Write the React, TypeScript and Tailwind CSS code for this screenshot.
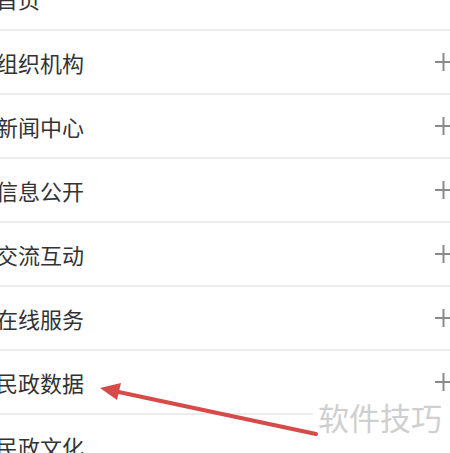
const items = ["首页", "组织机构", "新闻中心", "信息公开", "交流互动", "在线服务", "民政数据", "民政文化"];

const PlusMark = () => (
  <svg width="17" height="20" viewBox="0 0 17 20" className="shrink-0 -mr-[2px]">
    <line x1="0" y1="10" x2="17" y2="10" stroke="#8a8a8a" strokeWidth="2" />
    <line x1="8.5" y1="1" x2="8.5" y2="19" stroke="#8a8a8a" strokeWidth="2" />
  </svg>
);

export default function App() {
  return (
    <div
      className="relative w-[450px] h-[453px] overflow-hidden bg-white"
      style={{ fontFamily: '"Noto Sans CJK SC", "Noto Sans", sans-serif' }}
    >
      <ul className="-mt-[33px]">
        {items.map((item, i) => (
          <li
            key={item}
            className="flex items-center justify-between h-[64px] border-b-2 border-[#ececec]"
          >
            <span className="-ml-[4px] text-[22px] leading-none text-[#333333]">{item}</span>
            {i > 0 && <PlusMark />}
          </li>
        ))}
      </ul>

      {/* watermark */}
      <div className="absolute left-[313px] top-[398px] bottom-0 right-0 pl-[5px] bg-white text-[31px] leading-[38px] text-[#cfcfcf]">
        软件技巧
      </div>

      {/* annotation arrow */}
      <svg className="absolute left-0 top-0" width="450" height="453" viewBox="0 0 450 453">
        <line x1="316" y1="434" x2="114" y2="391" stroke="#d64a4a" strokeWidth="4" strokeLinecap="round" />
        <polygon points="100,388 121,383 117,400" fill="#d64a4a" />
      </svg>
    </div>
  );
}
